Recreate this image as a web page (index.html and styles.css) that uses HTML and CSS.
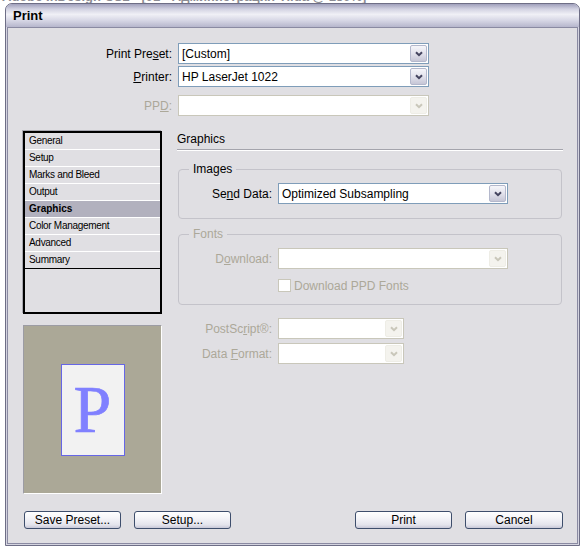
FILE: index.html
```html
<!DOCTYPE html>
<html>
<head>
<meta charset="utf-8">
<link rel="stylesheet" href="styles.css">
</head>
<body>
<div class="screen">
  <div class="apptitle"><span>Adobe InDesign CS2 - [01 - Администрация Tilda @ 150%]</span></div>
  <div class="window">
    <div class="titlebar">Print</div>
    <div class="client">
      <div class="presets">
        <label class="lbl">Print Pre<u>s</u>et:</label>
        <div class="combo"><span class="val">[Custom]</span><span class="dd"><svg width="8" height="6" viewBox="0 0 8 6"><path d="M1 1.2 L4 4.2 L7 1.2" /></svg></span></div>
        <label class="lbl"><u>P</u>rinter:</label>
        <div class="combo"><span class="val">HP LaserJet 1022</span><span class="dd"><svg width="8" height="6" viewBox="0 0 8 6"><path d="M1 1.2 L4 4.2 L7 1.2" /></svg></span></div>
        <label class="lbl dis ppd">PP<u>D</u>:</label>
        <div class="combo disabled ppd"><span class="val"></span><span class="dd"><svg width="8" height="6" viewBox="0 0 8 6"><path d="M1 1.2 L4 4.2 L7 1.2" /></svg></span></div>
      </div>

      <div class="main">
        <div class="leftcol">
          <div class="list">
            <div class="item">General</div>
            <div class="item">Setup</div>
            <div class="item">Marks and Bleed</div>
            <div class="item">Output</div>
            <div class="item sel">Graphics</div>
            <div class="item">Color Management</div>
            <div class="item">Advanced</div>
            <div class="item last">Summary</div>
          </div>
          <div class="preview">
            <div class="page"><span class="pletter">P</span></div>
          </div>
        </div>

        <div class="rightcol">
          <div class="heading">Graphics</div>

          <div class="group images">
            <span class="legend">Images</span>
            <div class="row">
              <label class="glbl">Se<u>n</u>d Data:</label>
              <div class="combo wide"><span class="val">Optimized Subsampling</span><span class="dd"><svg width="8" height="6" viewBox="0 0 8 6"><path d="M1 1.2 L4 4.2 L7 1.2" /></svg></span></div>
            </div>
          </div>

          <div class="group fonts">
            <span class="legend dis">Fonts</span>
            <div class="row">
              <label class="glbl dis">D<u>o</u>wnload:</label>
              <div class="combo wide disabled"><span class="val"></span><span class="dd"><svg width="8" height="6" viewBox="0 0 8 6"><path d="M1 1.2 L4 4.2 L7 1.2" /></svg></span></div>
            </div>
            <div class="checkrow">
              <span class="check"></span><span class="dis">Download PPD Fonts</span>
            </div>
          </div>

          <div class="row loose first">
            <label class="glbl dis">PostSc<u>r</u>ipt®:</label>
            <div class="combo narrow disabled"><span class="val"></span><span class="dd"><svg width="8" height="6" viewBox="0 0 8 6"><path d="M1 1.2 L4 4.2 L7 1.2" /></svg></span></div>
          </div>
          <div class="row loose second">
            <label class="glbl dis">Data <u>F</u>ormat:</label>
            <div class="combo narrow disabled"><span class="val"></span><span class="dd"><svg width="8" height="6" viewBox="0 0 8 6"><path d="M1 1.2 L4 4.2 L7 1.2" /></svg></span></div>
          </div>
        </div>
      </div>

      <div class="buttons">
        <div class="bgroup left">
          <button class="btn">Save Preset...</button>
          <button class="btn">Setup...</button>
        </div>
        <div class="bgroup right">
          <button class="btn">Print</button>
          <button class="btn">Cancel</button>
        </div>
      </div>
    </div>
  </div>
</div>
</body>
</html>
```

FILE: styles.css
```css
* { box-sizing: border-box; }

html, body {
  margin: 0;
  padding: 0;
  background: #ffffff;
}

.screen {
  width: 585px;
  height: 552px;
  overflow: hidden;
  background: #ffffff;
  font-family: "Liberation Sans", Arial, sans-serif;
  font-size: 12px;
  color: #000;
}

.apptitle {
  height: 3px;
  overflow: hidden;
  padding-left: 2px;
  white-space: nowrap;
}
.apptitle span {
  display: block;
  margin-top: -10px;
  font-size: 13px;
  line-height: 13px;
  font-weight: bold;
  color: #8c8c94;
}

.window {
  margin-left: 5px;
  width: 575px;
  height: 543px;
  border: 1px solid #6e6e86;
  border-radius: 7px 7px 0 0;
  background: #d4d4e0;
  padding: 0 1px 1px 1px;
  display: flex;
  flex-direction: column;
}

.titlebar {
  height: 23px;
  border-radius: 6px 6px 0 0;
  margin: 0 -1px;
  padding-left: 7px;
  font-size: 13px;
  font-weight: bold;
  line-height: 24px;
  color: #000;
  background: linear-gradient(to bottom, #a0a0bc 0%, #d2d2e2 22%, #f0f0f6 45%, #d8d8e6 70%, #b6b6cc 100%);
}

.client {
  flex: 1;
  border: 1px solid #8a8aa2;
  background: #e0dfe3;
  padding: 15px 14px 0 15px;
  display: flex;
  flex-direction: column;
}

/* top presets */
.presets {
  display: grid;
  grid-template-columns: 149px 251px;
  column-gap: 6px;
  row-gap: 2px;
  align-items: center;
}
.lbl {
  text-align: right;
  font-size: 12px;
  white-space: nowrap;
}
.ppd { margin-top: 6px; }

.dis { color: #aca899; }

/* combo box */
.combo {
  height: 21px;
  border: 1px solid #7f9db9;
  background: #fff;
  display: flex;
  align-items: center;
}
.combo .val {
  flex: 1;
  padding-left: 3px;
  font-size: 12px;
  line-height: 14px;
  white-space: nowrap;
  overflow: hidden;
}
.combo .dd {
  width: 17px;
  height: 17px;
  margin-right: 1px;
  border: 1px solid #b4b8cc;
  border-radius: 2px;
  background: linear-gradient(to bottom, #f6f6fa 0%, #e2e2ec 50%, #c6c6d6 100%);
  display: flex;
  align-items: center;
  justify-content: center;
}
.combo .dd svg path {
  fill: none;
  stroke: #44445f;
  stroke-width: 2;
}
.combo.disabled {
  border-color: #c9c7ba;
}
.combo.disabled .dd {
  border-color: #eeede6;
  background: #f4f3ee;
}
.combo.disabled .dd svg path {
  stroke: #c9c7ba;
}
.combo.wide { width: 230px; }
.combo.narrow { width: 126px; }

/* main */
.main {
  margin-top: 15px;
  display: flex;
  gap: 15px;
}
.leftcol {
  width: 139px;
  display: flex;
  flex-direction: column;
}
.list {
  height: 183px;
  border: 2px solid #000;
  box-shadow: -1px -1px 0 #a8a8b0;
  background: #e0dfe3;
}
.item {
  height: 17px;
  padding-left: 4px;
  font-size: 10px;
  letter-spacing: -0.3px;
  line-height: 16px;
  border-bottom: 1px solid #ffffff;
  white-space: nowrap;
}
.item.sel {
  background: #b2b1be;
  font-weight: bold;
  letter-spacing: 0;
}
.item.last {
  border-bottom: 1px solid #000;
}

.preview {
  margin-top: 11px;
  height: 169px;
  background: #aba897;
  border-top: 1px solid #9c9ca4;
  border-left: 1px solid #9c9ca4;
  border-right: 1px solid #fff;
  border-bottom: 1px solid #fff;
  display: flex;
  align-items: center;
  justify-content: center;
}
.page {
  width: 64px;
  height: 92px;
  background: #f2f2f2;
  border: 1px solid #6666e6;
  display: flex;
  align-items: center;
  justify-content: center;
}
.pletter {
  font-family: "Liberation Serif", "Times New Roman", serif;
  font-size: 68px;
  line-height: 60px;
  height: 62px;
  color: #8080ff;
  padding-bottom: 2px;
  -webkit-text-stroke: 0.7px #8080ff;
}

/* right */
.rightcol {
  width: 386px;
  display: flex;
  flex-direction: column;
}
.heading {
  height: 19px;
  padding-top: 1px;
  line-height: 14px;
  font-size: 12px;
  border-bottom: 1px solid #a4a4ac;
  box-shadow: 0 1px 0 #ffffff;
}

.group {
  margin: 0 1px;
  border: 1px solid #c4c3ca;
  border-radius: 4px;
  display: flex;
  flex-direction: column;
  align-items: flex-start;
}
.group.images {
  margin-top: 19px;
  padding-bottom: 14px;
}
.group.fonts {
  margin-top: 15px;
  padding-bottom: 12px;
}
.legend {
  display: inline-block;
  margin-top: -8px;
  margin-left: 10px;
  padding: 0 4px;
  line-height: 14px;
  height: 14px;
  background: #e0dfe3;
  font-size: 12px;
}
.row {
  margin-top: 7px;
  display: flex;
  align-items: center;
  gap: 6px;
}
.glbl {
  width: 93px;
  text-align: right;
  white-space: nowrap;
  font-size: 12px;
}
.checkrow {
  margin-top: 10px;
  margin-left: 99px;
  display: flex;
  align-items: center;
  height: 13px;
  font-size: 12px;
  white-space: nowrap;
}
.check {
  width: 13px;
  height: 13px;
  border: 1px solid #c9c7ba;
  background: #fff;
  margin-right: 3px;
}
.row.loose {
  padding-left: 2px;
}
.row.loose.first { margin-top: 13px; }
.row.loose.second { margin-top: 4px; }

/* buttons */
.buttons {
  margin-top: 17px;
  display: flex;
  justify-content: space-between;
}
.bgroup {
  display: flex;
  gap: 13px;
}
.bgroup.left { margin-left: 1px; }
.btn {
  width: 97px;
  height: 18px;
  padding: 0;
  border: 1px solid #3e4e6c;
  border-radius: 3px;
  background: linear-gradient(to bottom, #ffffff 0%, #f4f4f8 40%, #e4e4ec 80%, #c8c8d8 100%);
  font-family: "Liberation Sans", Arial, sans-serif;
  font-size: 12px;
  line-height: 16px;
  color: #000;
}
.bgroup.right .btn:last-child { width: 98px; }
```
